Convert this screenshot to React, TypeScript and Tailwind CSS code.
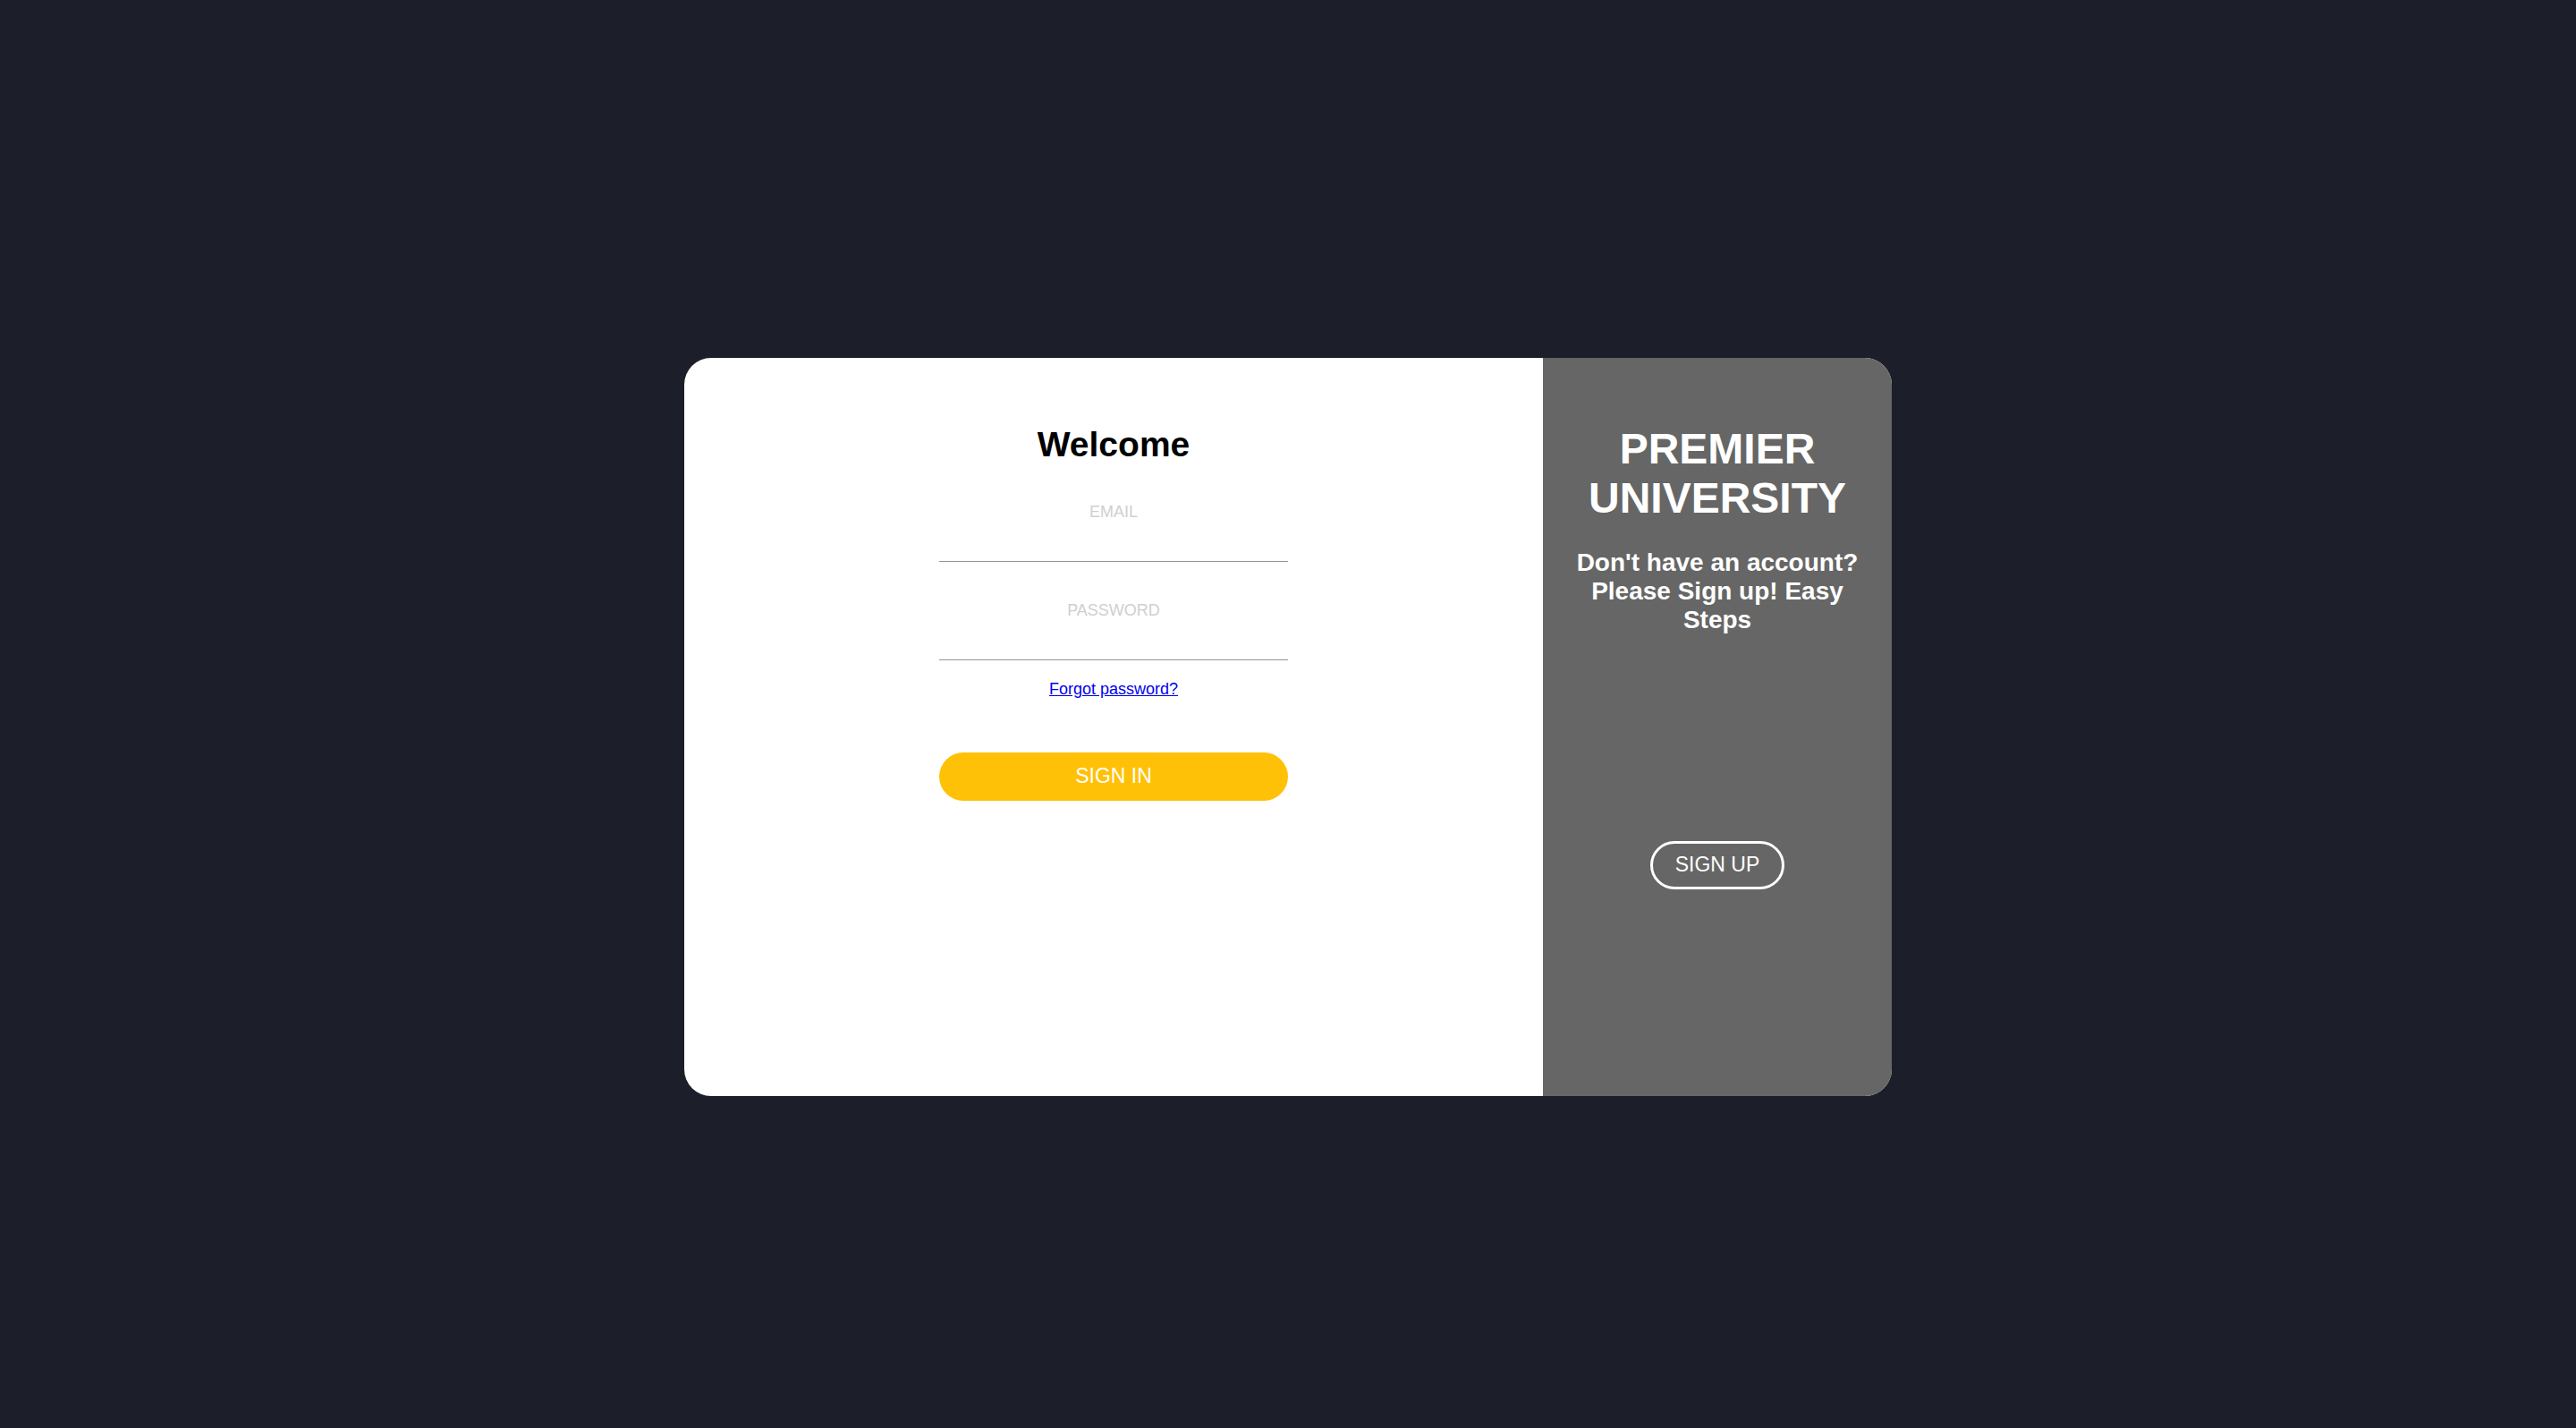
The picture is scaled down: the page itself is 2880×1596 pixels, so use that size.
import React, { useState } from "react";

type FieldProps = {
  id: string;
  label: string;
  type: string;
  value: string;
  onChange: (value: string) => void;
};

function Field({ id, label, type, value, onChange }: FieldProps) {
  return (
    <div className="flex w-full flex-col text-center">
      <label htmlFor={id} className="text-[18px] leading-5 text-[#cfcfcf] uppercase">
        {label}
      </label>
      <input
        id={id}
        type={type}
        value={value}
        onChange={(e) => onChange(e.target.value)}
        className="h-[46px] w-full border-b border-[#949494] bg-transparent text-center text-2xl text-black outline-none"
      />
    </div>
  );
}

export default function App() {
  const [email, setEmail] = useState("");
  const [password, setPassword] = useState("");

  return (
    <div className="min-h-screen bg-[#1c1e29] px-6 pt-[400px] pb-24 font-['Liberation_Sans',Arial,sans-serif]">
      <main className="mx-auto grid max-w-[1350px] grid-cols-[1fr_390px] overflow-hidden rounded-[30px] bg-white">
        <form
          className="mx-auto flex w-full max-w-[390px] flex-col items-center pt-[75px]"
          onSubmit={(e) => e.preventDefault()}
        >
          <h2 className="mb-[43px] text-[39px] leading-[44px] font-bold text-black">Welcome</h2>
          <div className="flex w-full flex-col gap-11">
            <Field id="email" label="Email" type="email" value={email} onChange={setEmail} />
            <Field id="password" label="Password" type="password" value={password} onChange={setPassword} />
          </div>
          <a href="#forgot" className="mt-[22px] text-[18px] leading-5 text-[#0000ee] underline">
            Forgot password?
          </a>
          <button
            type="submit"
            className="mt-[61px] h-[54px] w-full rounded-full bg-[#ffc107] pb-0.5 text-[23px] text-white uppercase"
          >
            Sign in
          </button>
        </form>
        <aside className="flex flex-col items-center bg-[#666666] px-[30px] pt-[74px] pb-[231px] text-center text-white">
          <h1 className="text-5xl leading-[55px] font-bold">PREMIER UNIVERSITY</h1>
          <h3 className="mt-[29px] text-[28px] leading-8 font-bold">
            Don't have an account? Please Sign up! Easy Steps
          </h3>
          <button
            type="button"
            className="mt-[231px] h-[54px] w-[150px] rounded-full border-3 border-white pb-0.5 text-[23px] uppercase"
          >
            Sign up
          </button>
        </aside>
      </main>
    </div>
  );
}
